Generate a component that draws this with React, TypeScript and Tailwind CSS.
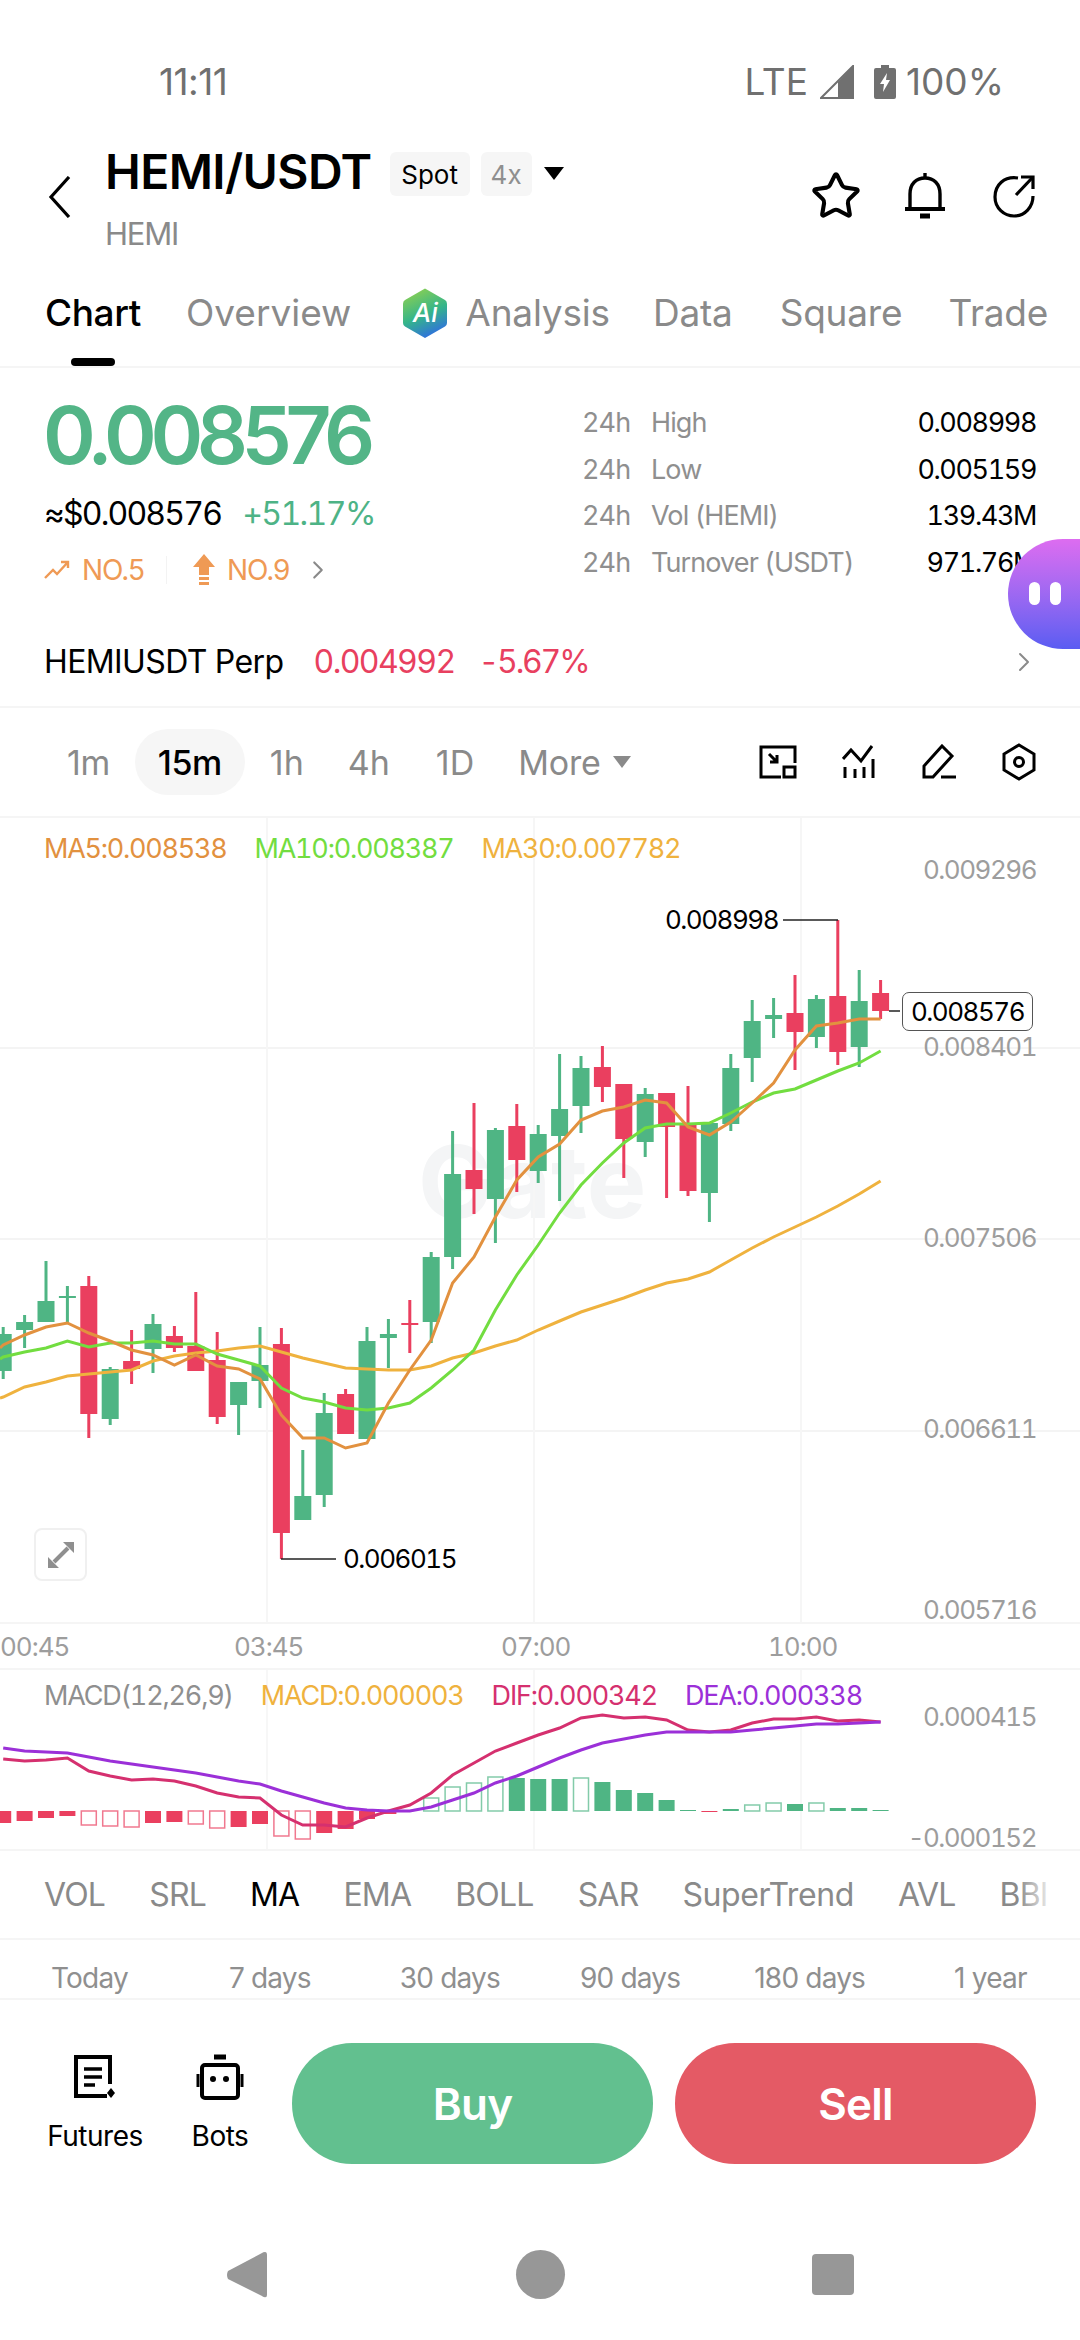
import React from 'react';
import { ChevronRight, Star } from 'lucide-react';

const GREEN = '#4fb584';
const RED = '#ea3f5f';

const candleX = (k: number) => 281.4 + 21.4 * k;

// k, wickTop, wickBottom, bodyTop, bodyBottom, up
type Candle = [number, number, number, number, number, number];

const candles: Candle[] = [
  [-13, 1327, 1379, 1334, 1371, 1],
  [-12, 1315, 1348, 1322, 1330, 1],
  [-11, 1261, 1322, 1301, 1322, 1],
  [-10, 1286, 1323, 1296, 1298, 1],
  [-9, 1276, 1438, 1286, 1414, 0],
  [-8, 1367, 1425, 1369, 1419, 1],
  [-7, 1330, 1384, 1361, 1369, 0],
  [-6, 1314, 1373, 1324, 1349, 1],
  [-5, 1326, 1352, 1336, 1348, 0],
  [-4, 1292, 1371, 1346, 1371, 0],
  [-3, 1332, 1424, 1360, 1417, 0],
  [-2, 1382, 1435, 1382, 1405, 1],
  [-1, 1327, 1408, 1365, 1381, 1],
  [0, 1328, 1559, 1344, 1533, 0],
  [1, 1450, 1520, 1496, 1520, 1],
  [2, 1393, 1507, 1413, 1495, 1],
  [3, 1389, 1434, 1394, 1434, 0],
  [4, 1327, 1439, 1341, 1439, 1],
  [5, 1319, 1368, 1334, 1338, 1],
  [6, 1300, 1353, 1323, 1325, 0],
  [7, 1252, 1343, 1257, 1322, 1],
  [8, 1131, 1269, 1174, 1257, 1],
  [9, 1103, 1214, 1170, 1189, 0],
  [10, 1128, 1243, 1130, 1199, 1],
  [11, 1104, 1192, 1126, 1160, 0],
  [12, 1125, 1183, 1134, 1171, 1],
  [13, 1054, 1201, 1109, 1136, 1],
  [14, 1056, 1133, 1068, 1106, 1],
  [15, 1046, 1102, 1067, 1087, 0],
  [16, 1084, 1178, 1084, 1139, 0],
  [17, 1088, 1157, 1094, 1142, 1],
  [18, 1093, 1198, 1093, 1127, 0],
  [19, 1086, 1196, 1125, 1191, 0],
  [20, 1123, 1222, 1123, 1193, 1],
  [21, 1054, 1131, 1068, 1124, 1],
  [22, 1000, 1082, 1021, 1058, 1],
  [23, 998, 1038, 1015, 1019, 1],
  [24, 975, 1070, 1013, 1032, 0],
  [25, 995, 1048, 999, 1037, 1],
  [26, 920, 1065, 996, 1052, 0],
  [27, 970, 1067, 1001, 1047, 1],
  [28, 980, 1019, 993, 1011, 0],
];

// line values start at k = -13
const ma5 = [1345, 1335, 1327, 1323, 1333, 1341, 1350, 1355, 1365, 1355, 1366, 1369, 1379, 1415, 1438, 1438, 1448, 1443, 1403, 1370, 1340, 1283, 1257, 1217, 1180, 1157, 1144, 1120, 1111, 1107, 1100, 1103, 1127, 1135, 1122, 1103, 1083, 1050, 1026, 1023, 1019, 1019];
const ma10 = [1357, 1352, 1348, 1341, 1347, 1343, 1343, 1341, 1344, 1344, 1354, 1360, 1366, 1388, 1398, 1402, 1408, 1410, 1408, 1403, 1388, 1370, 1350, 1310, 1275, 1245, 1213, 1185, 1163, 1143, 1128, 1124, 1124, 1123, 1113, 1102, 1093, 1089, 1080, 1071, 1063, 1051];
const ma30 = [1397, 1387, 1382, 1376, 1374, 1372, 1370, 1361, 1356, 1353, 1351, 1348, 1346, 1352, 1358, 1363, 1368, 1369, 1370, 1370, 1366, 1358, 1353, 1346, 1340, 1330, 1321, 1312, 1305, 1298, 1290, 1283, 1279, 1272, 1260, 1248, 1237, 1227, 1217, 1206, 1194, 1181];

const dif = [1759, 1761, 1760, 1758, 1771, 1776, 1780, 1779, 1781, 1786, 1793, 1797, 1798, 1815, 1825, 1825, 1827, 1818, 1811, 1805, 1793, 1775, 1763, 1751, 1743, 1735, 1728, 1718, 1715, 1718, 1717, 1720, 1730, 1732, 1730, 1723, 1719, 1719, 1717, 1721, 1720, 1722];
const dea = [1748, 1751, 1752, 1753, 1757, 1761, 1764, 1767, 1770, 1773, 1777, 1781, 1784, 1791, 1797, 1803, 1808, 1810, 1811, 1811, 1807, 1800, 1793, 1783, 1776, 1767, 1758, 1750, 1743, 1739, 1735, 1732, 1732, 1732, 1732, 1730, 1728, 1726, 1724, 1724, 1723, 1722];

// height of each MACD bar from k = -13, negative hangs under the zero line
const macd: [number, number][] = [
  [-12, 1], [-10, 1], [-7, 1], [-5, 1], [-14, 0], [-15, 0], [-16, 0], [-12, 1], [-11, 1], [-13, 0], [-17, 0], [-16, 1], [-13, 1], [-25, 0], [-28, 0], [-22, 1], [-18, 1], [-8, 1], [-3, 1],
  [1, 1], [13, 0], [24, 0], [28, 0], [34, 0], [33, 1], [32, 1], [32, 1], [33, 0], [29, 1], [21, 1], [18, 1], [11, 1], [1, 1], [-1, 1], [2, 1], [6, 0], [8, 0], [7, 1], [8, 0], [3, 1], [3, 1], [1, 1],
];

const toPoints = (ys: number[]) => ys.map((y, i) => `${candleX(i - 13).toFixed(1)},${y}`).join(' ');

const AiLogo = () => (
  <div className="relative w-[48px] h-[52px] shrink-0">
    <svg width="48" height="52" viewBox="0 0 48 52">
      <defs>
        <linearGradient id="aiGrad" x1="0.2" y1="0" x2="0.6" y2="1">
          <stop offset="0" stopColor="#8fd14f" />
          <stop offset="0.55" stopColor="#35b58a" />
          <stop offset="1" stopColor="#2f6fe0" />
        </linearGradient>
      </defs>
      <path d="M24 1.5 L44 13 Q46 14 46 17 L46 36 Q46 38 44 39.5 L24 51 L4 39.5 Q2 38 2 36 L2 17 Q2 14 4 13 Z" fill="url(#aiGrad)" />
    </svg>
    <span className="absolute inset-0 flex items-center justify-center text-white font-medium italic text-[26px] leading-none">Ai</span>
  </div>
);

const BackIcon = () => (
  <svg width="24" height="42" viewBox="0 0 24 42" fill="none" stroke="#000" strokeWidth="3.2">
    <path d="M21 1 L3 21 L21 41" />
  </svg>
);

const BellIcon = () => (
  <svg width="44" height="48" viewBox="0 0 44 48" fill="none" stroke="#000" strokeWidth="3.4">
    <path d="M22 1 L22 6" />
    <path d="M7 36 L7 22 C7 12 13 6 22 6 C31 6 37 12 37 22 L37 36" />
    <path d="M2 37 L42 37" strokeWidth="4" />
    <path d="M17 44 L27 44" strokeWidth="5" />
  </svg>
);

const RefreshIcon = () => (
  <svg width="44" height="44" viewBox="0 0 44 44" fill="none" stroke="#000" strokeWidth="3.2">
    <path d="M26 4 C12 2 3 11 3 23 C3 34 12 42 22 42 C33 42 41 33 41 22" />
    <path d="M24 21 L41 3" />
    <path d="M29 3 L41 3 L41 15" />
  </svg>
);

const IconPiP = () => (
  <svg width="38" height="34" viewBox="0 0 38 34" fill="none" stroke="#000" strokeWidth="3">
    <path d="M36 18 L36 2 L2 2 L2 32 L22 32" />
    <path d="M10 9 L18 17 M18 10 L18 17 L11 17" />
    <rect x="25" y="22" width="11" height="10" />
  </svg>
);

const IconIndicator = () => (
  <svg width="34" height="34" viewBox="0 0 34 34" fill="none" stroke="#000" strokeWidth="3">
    <path d="M1 14 L9 5 L19 16 L30 1" />
    <path d="M3 33 L3 22 M13 33 L13 24 M22 33 L22 22 M31 33 L31 14" />
  </svg>
);

const IconPen = () => (
  <svg width="36" height="36" viewBox="0 0 36 36" fill="none" stroke="#000" strokeWidth="3">
    <path d="M3 33 L3 22 L21 2 L31 12 L12 33 Z" />
    <path d="M20 33 L35 33" />
  </svg>
);

const IconGear = () => (
  <svg width="34" height="38" viewBox="0 0 34 38" fill="none" stroke="#000" strokeWidth="3">
    <path d="M17 2 L32 11 L32 27 L17 36 L2 27 L2 11 Z" />
    <circle cx="17" cy="19" r="4.5" />
  </svg>
);

const IconFutures = () => (
  <svg width="44" height="46" viewBox="0 0 44 46" fill="none" stroke="#000" strokeWidth="4">
    <path d="M37 30 L37 3 L3 3 L3 42 L34 42" />
    <path d="M11 15 L29 15 M11 23 L29 23 M11 31 L22 31" strokeWidth="3.6" />
    <path d="M38 34 L42 39 L38 44 L34 39 Z" fill="#000" stroke="none" />
  </svg>
);

const IconBot = () => (
  <svg width="48" height="46" viewBox="0 0 48 46" fill="none" stroke="#000" strokeWidth="4">
    <path d="M18 3 L30 3" strokeWidth="5" />
    <rect x="6" y="11" width="36" height="33" rx="3" />
    <path d="M2 20 L2 33 M46 20 L46 33" strokeWidth="3" />
    <circle cx="17" cy="25" r="3" fill="#000" stroke="none" />
    <circle cx="30" cy="25" r="3" fill="#000" stroke="none" />
  </svg>
);

const stats = [
  { label: 'High', value: '0.008998' },
  { label: 'Low', value: '0.005159' },
  { label: 'Vol (HEMI)', value: '139.43M' },
  { label: 'Turnover (USDT)', value: '971.76M' },
];

const App: React.FC = () => {
  return (
    <div className="relative w-[1080px] h-[2340px] overflow-hidden bg-white font-['Inter',sans-serif] text-black">
      {/* Status bar */}
      <div className="h-[120px] pt-[44px] flex justify-between text-[#707070] text-[37px] leading-[76px]">
        <span className="ml-[159px] tracking-[-0.5px]">11:11</span>
        <div className="flex items-center mr-[76px]">
          <span>LTE</span>
          <svg className="ml-[12px]" width="34" height="34" viewBox="0 0 34 34"><path d="M33 1 L33 33 L1 33 Z" fill="none" stroke="#707070" strokeWidth="2" /><path d="M18 17 L18 33 L33 33 L33 1 Z" fill="#707070" /></svg>
          <svg className="ml-[20px]" width="22" height="34" viewBox="0 0 22 34"><path d="M7 0 L15 0 L15 3 L20 3 Q22 3 22 5 L22 32 Q22 34 20 34 L2 34 Q0 34 0 32 L0 5 Q0 3 2 3 L7 3 Z" fill="#707070" /><path d="M13 8 L6 19 L10 19 L9 27 L16 15 L12 15 Z" fill="#fff" /></svg>
          <span className="ml-[10px]">100%</span>
        </div>
      </div>

      {/* Header */}
      <div className="h-[150px] flex">
        <div className="w-[105px] pl-[48px] pt-[56px]">
          <BackIcon />
        </div>
        <div className="flex-1">
          <div className="flex items-start pt-[25px]">
            <span className="text-[48px] leading-[54px] font-semibold tracking-[-0.6px]">HEMI/USDT</span>
            <span className="ml-[18px] mt-[7px] w-[80px] h-[44px] rounded-[6px] bg-[#f6f6f6] flex items-center justify-center text-[26px]">Spot</span>
            <span className="ml-[11px] mt-[7px] w-[51px] h-[44px] rounded-[6px] bg-[#f6f6f6] flex items-center justify-center text-[26px] text-[#8f8f8f]">4x</span>
            <span className="ml-[12px] mt-[22px] w-0 h-0 border-x-[10px] border-x-transparent border-t-[13px] border-t-black" />
          </div>
          <div className="mt-[13px] text-[31px] leading-[44px] text-[#8a8a8a] tracking-[-1.2px]">HEMI</div>
        </div>
        <div className="flex items-center gap-[45px] pr-[44px] h-[152px]">
          <Star size={52} strokeWidth={1.9} className="-ml-[2px] -mr-[2px] translate-x-[2px]" />
          <BellIcon />
          <RefreshIcon />
        </div>
      </div>

      {/* Tabs */}
      <div className="relative h-[98px] border-b-2 border-[#f5f5f5] flex items-center pl-[45px] pb-[10px] text-[37px] text-[#8a8a8a] whitespace-nowrap">
        <span className="text-black font-medium tracking-[-0.4px]">Chart</span>
        <span className="ml-[45px]">Overview</span>
        <span className="ml-[50px]"><AiLogo /></span>
        <span className="ml-[16px] tracking-[-0.2px]">Analysis</span>
        <span className="ml-[43px] tracking-[-0.2px]">Data</span>
        <span className="ml-[47px] tracking-[-0.2px]">Square</span>
        <span className="ml-[46px] tracking-[-0.2px]">Trade</span>
        <div className="absolute left-[71px] bottom-0 w-[44px] h-[8px] rounded-[4px] bg-black" />
      </div>

      {/* Price and 24h stats */}
      <div className="h-[250px] flex">
        <div className="w-[582px] pl-[44px]">
          <div className="mt-[25px] h-[84px] -ml-[1px] text-[80px] leading-[84px] font-semibold text-[#53b587] tracking-[-6.4px]">0.008576</div>
          <div className="mt-[15px] h-[44px] flex items-center text-[32px] tabular-nums">
            <span className="tracking-[-1.8px]">≈$0.008576</span>
            <span className="ml-[21px] text-[#4db386] tracking-[-1.6px]">+51.17%</span>
          </div>
          <div className="mt-[14px] h-[40px] flex items-center text-[28px] text-[#ef9a55] tracking-[-1px]">
            <svg width="26" height="22" viewBox="0 0 26 22" fill="none" stroke="#ef9a55" strokeWidth="2.4"><path d="M1 19 L9 11 L13 15 L24 3 M17 3 L24 3 L24 9" /></svg>
            <span className="ml-[12px]">NO.5</span>
            <span className="ml-[22px] w-[1px] h-[28px] bg-[#f3f3f3]" />
            <svg className="ml-[25px]" width="24" height="34" viewBox="0 0 24 34" fill="#ef9a55"><path d="M12 1 L23 14 L17 14 L17 22 L7 22 L7 14 L1 14 Z" /><rect x="7" y="24" width="10" height="3" /><rect x="7" y="29" width="10" height="3" /></svg>
            <span className="ml-[11px]">NO.9</span>
            <ChevronRight size={30} strokeWidth={1.7} className="ml-[14px] text-[#8a8a8a]" />
          </div>
        </div>
        <div className="flex-1 pt-[32px] pr-[44px]">
          {stats.map((s) => (
            <div key={s.label} className="h-[46.6px] flex items-center text-[27px] tracking-[-0.9px] whitespace-nowrap tabular-nums">
              <span className="w-[69px] text-[#8f8f8f]">24h</span>
              <span className="text-[#8f8f8f]">{s.label}</span>
              <span className="ml-auto tracking-[-1.4px]">{s.value}</span>
            </div>
          ))}
        </div>
      </div>

      {/* Floating assistant */}
      <div className="absolute left-[1008px] top-[539px] w-[90px] h-[110px] rounded-l-[55px] bg-gradient-to-b from-[#dd6cf0] to-[#5a5cf2]">
        <div className="absolute left-[21px] top-[43px] w-[11px] h-[23px] rounded-full bg-white" />
        <div className="absolute left-[42px] top-[43px] w-[11px] h-[23px] rounded-full bg-white" />
      </div>

      {/* Perp row */}
      <div className="h-[90px] border-b-2 border-[#f5f5f5] flex items-center pl-[44px] pr-[44px] text-[32px] whitespace-nowrap tabular-nums">
        <span className="tracking-[-0.6px]">HEMIUSDT Perp</span>
        <span className="ml-[30px] text-[#e8405f] tracking-[-1.6px]">0.004992</span>
        <span className="ml-[24px] text-[#e8405f] tracking-[-2.2px]">-5.67%</span>
        <ChevronRight size={32} strokeWidth={1.5} className="ml-auto -mr-[4px] text-[#8a8a8a]" />
      </div>

      {/* Intervals */}
      <div className="h-[110px] border-b-2 border-[#f5f5f5] flex items-center text-[34px] text-[#8a8a8a] whitespace-nowrap">
        <span className="ml-[67px] tracking-[-0.4px]">1m</span>
        <span className="ml-[25px] w-[110px] h-[66px] rounded-[33px] bg-[#f6f6f6] flex items-center justify-center text-black font-medium tracking-[-0.4px]">15m</span>
        <span className="ml-[25px]">1h</span>
        <span className="ml-[44px]">4h</span>
        <span className="ml-[46px]">1D</span>
        <span className="ml-[44px] tracking-[-0.2px]">More</span>
        <span className="ml-[12px] w-0 h-0 border-x-[9px] border-x-transparent border-t-[12px] border-t-[#8a8a8a]" />
        <div className="ml-auto mr-[44px] flex items-center gap-[45px]">
          <IconPiP />
          <IconIndicator />
          <IconPen />
          <IconGear />
        </div>
      </div>

      {/* Candle chart */}
      <div className="relative h-[806px] border-b-2 border-[#f5f5f5] overflow-hidden">
        <div className="absolute left-[418px] top-[314px] text-[100px] leading-none font-bold text-[#f4f5f6]">Gate</div>

        <svg className="absolute inset-0" width="1080" height="804" viewBox="0 818 1080 804">
          {[1048, 1239, 1431].map((y) => (
            <line key={y} x1="0" x2="1080" y1={y} y2={y} stroke="#f4f4f4" strokeWidth="2" />
          ))}
          {[267, 534, 801].map((x) => (
            <line key={x} x1={x} x2={x} y1="818" y2="1622" stroke="#f6f6f6" strokeWidth="2" />
          ))}
          {candles.map(([k, wt, wb, bt, bb, up]) => {
            const x = candleX(k);
            const color = up ? GREEN : RED;
            return (
              <g key={k}>
                <rect x={x - 1.5} y={wt} width="3" height={wb - wt} fill={color} />
                <rect x={x - 8.5} y={bt} width="17" height={bb - bt} fill={color} />
              </g>
            );
          })}
          <polyline points={`0,1398 ${toPoints(ma30)}`} fill="none" stroke="#efb23e" strokeWidth="3" />
          <polyline points={`0,1359 ${toPoints(ma10)}`} fill="none" stroke="#72dd40" strokeWidth="3" />
          <polyline points={`0,1348 ${toPoints(ma5)}`} fill="none" stroke="#e2913f" strokeWidth="3" />
          <path d="M783 920 L838 920" stroke="#222" strokeWidth="1.5" fill="none" />
          <path d="M281 1559 L336 1559" stroke="#222" strokeWidth="1.5" fill="none" />
          <path d="M889 1011 L900 1011" stroke="#222" strokeWidth="1.5" fill="none" />
        </svg>

        <div className="absolute left-[44px] top-[16px] flex text-[27px] leading-[30px] tracking-[-1.25px] whitespace-nowrap tabular-nums">
          <span className="text-[#e2913f]">MA5:0.008538</span>
          <span className="ml-[28px] text-[#72dd40]">MA10:0.008387</span>
          <span className="ml-[28px] text-[#efb23e]">MA30:0.007782</span>
        </div>

        {['0.009296', '0.008401', '0.007506', '0.006611', '0.005716'].map((label, i) => (
          <span
            key={label}
            className="absolute right-[44px] text-[26px] leading-[30px] tracking-[-1.5px] text-[#9d9d9d] tabular-nums"
            style={{ top: [37, 214, 405, 596, 777][i] }}
          >
            {label}
          </span>
        ))}

        <span className="absolute left-[665px] top-[87px] text-[26px] leading-[30px] tracking-[-1.5px] tabular-nums">0.008998</span>
        <span className="absolute left-[343px] top-[726px] text-[26px] leading-[30px] tracking-[-1.5px] tabular-nums">0.006015</span>
        <span className="absolute left-[902px] top-[174px] w-[131px] h-[39px] bg-white border-[1.5px] border-[#555] rounded-[7px] flex items-center justify-center text-[26px] tracking-[-1.5px] tabular-nums">0.008576</span>

        <div className="absolute left-[34px] top-[710px] w-[53px] h-[53px] rounded-[8px] border-2 border-[#f0f0f0] flex items-center justify-center">
          <svg width="26" height="26" viewBox="0 0 26 26" fill="#8f8f8f">
            <path d="M26 0 L26 11 L15 0 Z M0 26 L0 15 L11 26 Z" />
            <path d="M20 6 L6 20" stroke="#8f8f8f" strokeWidth="4" />
          </svg>
        </div>
      </div>

      {/* Time axis */}
      <div className="h-[46px] border-b-2 border-[#f5f5f5] flex gap-[201px] items-center text-[26px] tracking-[-1px] text-[#9d9d9d] tabular-nums">
        {['00:45', '03:45', '07:00', '10:00'].map((t, i) => (
          <span key={t} className={i === 0 ? 'w-[66px] text-center -mr-[33px]' : 'w-[66px] text-center'}>{t}</span>
        ))}
      </div>

      {/* MACD */}
      <div className="relative h-[181px] border-b-2 border-[#f5f5f5]">
        <svg className="absolute inset-0" width="1080" height="179" viewBox="0 1670 1080 179">
          {[267, 534, 801].map((x) => (
            <line key={x} x1={x} x2={x} y1="1670" y2="1850" stroke="#f7f7f7" strokeWidth="2" />
          ))}
          {macd.map(([h, filled], i) => {
            const x = candleX(i - 13);
            const color = h < 0 ? RED : GREEN;
            const top = h < 0 ? 1811 : 1811 - h;
            const height = Math.abs(h);
            return filled ? (
              <rect key={i} x={x - 8} y={top} width="16" height={height} fill={color} />
            ) : (
              <rect key={i} x={x - 7.5} y={top} width="15" height={height} fill="none" stroke={color} strokeOpacity="0.7" strokeWidth="1.5" />
            );
          })}
          <polyline points={toPoints(dif)} fill="none" stroke="#d5306f" strokeWidth="3" />
          <polyline points={toPoints(dea)} fill="none" stroke="#9b30d8" strokeWidth="3" />
        </svg>
        <div className="absolute left-[44px] top-[11px] flex text-[27px] leading-[30px] tracking-[-1.2px] whitespace-nowrap tabular-nums">
          <span className="text-[#8f8f8f]">MACD(12,26,9)</span>
          <span className="ml-[28px] text-[#efb23e]">MACD:0.000003</span>
          <span className="ml-[28px] text-[#d5306f]">DIF:0.000342</span>
          <span className="ml-[28px] text-[#9b30d8]">DEA:0.000338</span>
        </div>
        <span className="absolute right-[44px] top-[32px] text-[26px] leading-[30px] tracking-[-1.5px] text-[#9d9d9d] tabular-nums">0.000415</span>
        <span className="absolute right-[44px] top-[153px] text-[26px] leading-[30px] tracking-[-1.5px] text-[#9d9d9d] tabular-nums">-0.000152</span>
      </div>

      {/* Indicators */}
      <div className="relative h-[89px] border-b-2 border-[#f5f5f5] flex items-center pl-[44px] gap-[44px] text-[32px] tracking-[-0.8px] text-[#8a8a8a] whitespace-nowrap overflow-hidden">
        {['VOL', 'SRL', 'MA', 'EMA', 'BOLL', 'SAR', 'SuperTrend', 'AVL', 'BBI'].map((name) => (
          <span key={name} className={name === 'MA' ? 'text-black' : name === 'SuperTrend' ? 'tracking-[-0.4px]' : ''}>{name}</span>
        ))}
        <div className="absolute right-0 top-0 bottom-0 w-[62px] bg-gradient-to-r from-transparent to-white to-[60%]" />
      </div>

      {/* Time ranges */}
      <div className="h-[60px] border-b-2 border-[#f5f5f5] flex pt-[20px] text-[28px] leading-[36px] tracking-[-0.8px] text-[#8f8f8f] whitespace-nowrap">
        <span className="ml-[51px]">Today</span>
        <span className="ml-[101px]">7 days</span>
        <span className="ml-[89px]">30 days</span>
        <span className="ml-[80px]">90 days</span>
        <span className="ml-[74px]">180 days</span>
        <span className="ml-[89px]">1 year</span>
      </div>

      {/* Actions */}
      <div className="h-[250px] pt-[43px] flex items-start">
        <div className="w-[146px] ml-[22px] flex flex-col items-center">
          <div className="mt-[11px] h-[46px]"><IconFutures /></div>
          <span className="mt-[20px] text-[28px] leading-[32px] tracking-[-0.5px]">Futures</span>
        </div>
        <div className="w-[70px] translate-x-[17px] flex flex-col items-center">
          <div className="mt-[11px] h-[46px]"><IconBot /></div>
          <span className="mt-[20px] text-[28px] leading-[32px] tracking-[-0.5px]">Bots</span>
        </div>
        <button className="ml-[54px] w-[361px] h-[121px] rounded-[60px] bg-[#62c08f] text-white text-[44px] font-semibold tracking-[-0.8px]">Buy</button>
        <button className="ml-[22px] w-[361px] h-[121px] rounded-[60px] bg-[#e45a65] text-white text-[44px] font-semibold tracking-[-0.8px]">Sell</button>
      </div>

      {/* Nav bar */}
      <div className="h-[90px] flex items-start">
        <svg className="ml-[226px] mt-[2px]" width="42" height="46" viewBox="0 0 42 46" fill="#979797"><path d="M39 0 Q41 0 41 3 L41 43 Q41 46 38 45 Q37 45 36 44 L2 27 Q0 23 2 19 L36 1 Q37 0 39 0 Z" /></svg>
        <div className="ml-[248px] w-[49px] h-[49px] rounded-full bg-[#979797]" />
        <div className="ml-[247px] mt-[4px] w-[42px] h-[41px] rounded-[4px] bg-[#979797]" />
      </div>
    </div>
  );
};

export default App;
